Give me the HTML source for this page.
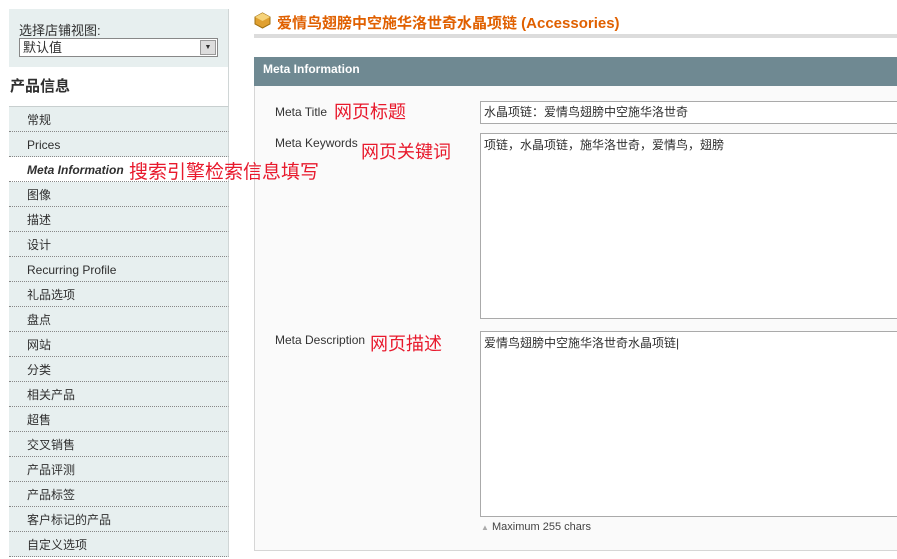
<!DOCTYPE html>
<html><head><meta charset="utf-8"><style>
*{margin:0;padding:0;box-sizing:border-box}
body{width:897px;height:559px;overflow:hidden;background:#fff;font-family:"Liberation Sans","Noto Sans CJK SC",sans-serif;font-size:12px;color:#2f2f2f;position:relative}
.abs{position:absolute}
.sw{left:9px;top:9px;width:220px;height:58px;background:#e7efef;border-right:1px solid #d0d6d6}
.sel{left:19px;top:38px;width:199px;height:19px;border:1px solid #888;background:#fff;font-size:13px;padding-left:3px;line-height:17px}
.arr{right:1px;top:1px;width:16px;height:15px;background:#ddd;border:1px solid #999;text-align:center;font-size:7px;line-height:13px}
.hd{left:9px;top:67px;width:220px;height:40px;border-bottom:1px solid #c8cfcf;border-right:1px solid #d0d6d6;font-size:15px;font-weight:bold;line-height:40px;padding-left:1px}
.tab{left:9px;width:220px;height:25px;background:#e7efef;border-bottom:1px dotted #888;border-right:1px solid #d0d6d6;padding-left:18px;line-height:27px;font-size:12px}
.red{color:#e8192c;font-size:18px;font-family:"Liberation Sans","WenQuanYi Zen Hei",sans-serif;z-index:5}
.lbl{font-size:12px;color:#333}
.inp{background:#fff;border:1px solid #aaa;border-right:none;font-size:12px;padding:2px 3px}
</style></head><body>
<div class="abs sw"></div>
<div class="abs" style="left:19px;top:20px;font-size:13px">选择店铺视图:</div>
<div class="abs sel">默认值<div class="abs arr">▼</div></div>
<div class="abs hd">产品信息</div>
<div class="abs tab" style="top:107px">常规</div>
<div class="abs tab" style="top:132px">Prices</div>
<div class="abs tab" style="top:157px;background:#fff;font-weight:bold;font-style:italic">Meta Information</div>
<div class="abs tab" style="top:182px">图像</div>
<div class="abs tab" style="top:207px">描述</div>
<div class="abs tab" style="top:232px">设计</div>
<div class="abs tab" style="top:257px">Recurring Profile</div>
<div class="abs tab" style="top:282px">礼品选项</div>
<div class="abs tab" style="top:307px">盘点</div>
<div class="abs tab" style="top:332px">网站</div>
<div class="abs tab" style="top:357px">分类</div>
<div class="abs tab" style="top:382px">相关产品</div>
<div class="abs tab" style="top:407px">超售</div>
<div class="abs tab" style="top:432px">交叉销售</div>
<div class="abs tab" style="top:457px">产品评测</div>
<div class="abs tab" style="top:482px">产品标签</div>
<div class="abs tab" style="top:507px">客户标记的产品</div>
<div class="abs tab" style="top:532px">自定义选项</div>

<svg class="abs" style="left:254px;top:12px" width="17" height="17" viewBox="0 0 17 17"><polygon points="8.5,1 16,5 16,12 8.5,16 1,12 1,5" fill="#e0a030" stroke="#a07010"/><polygon points="8.5,1 16,5 8.5,9 1,5" fill="#f6d37a"/></svg>
<div class="abs" style="left:277px;top:12px;color:#e06000;font-size:15px;font-weight:bold">爱情鸟翅膀中空施华洛世奇水晶项链 (Accessories)</div>
<div class="abs" style="left:254px;top:34px;width:643px;height:4px;background:#dcdcdc"></div>

<div class="abs" style="left:254px;top:57px;width:643px;height:494px;background:#fafafa;border:1px solid #d6d6d6;border-right:none"></div>
<div class="abs" style="left:254px;top:57px;width:643px;height:29px;background:#6f8992;color:#fff;font-weight:bold;font-size:12px;line-height:24px;padding-left:9px">Meta Information</div>

<div class="abs red" style="left:129px;top:157px;font-size:19px">搜索引擎检索信息填写</div>

<div class="abs lbl" style="left:275px;top:105px">Meta Title</div>
<div class="abs red" style="left:334px;top:98px">网页标题</div>
<div class="abs inp" style="left:480px;top:101px;width:417px;height:23px;line-height:17px">水晶项链：爱情鸟翅膀中空施华洛世奇</div>

<div class="abs lbl" style="left:275px;top:136px">Meta Keywords</div>
<div class="abs red" style="left:361px;top:138px">网页关键词</div>
<div class="abs inp" style="left:480px;top:133px;width:417px;height:186px">项链，水晶项链，施华洛世奇，爱情鸟，翅膀</div>

<div class="abs lbl" style="left:275px;top:333px">Meta Description</div>
<div class="abs red" style="left:370px;top:330px">网页描述</div>
<div class="abs inp" style="left:480px;top:331px;width:417px;height:186px">爱情鸟翅膀中空施华洛世奇水晶项链|</div>
<div class="abs" style="left:481px;top:521px;font-size:11px;color:#444"><span style="color:#aaa;font-size:8px">▲</span> Maximum 255 chars</div>
</body></html>
